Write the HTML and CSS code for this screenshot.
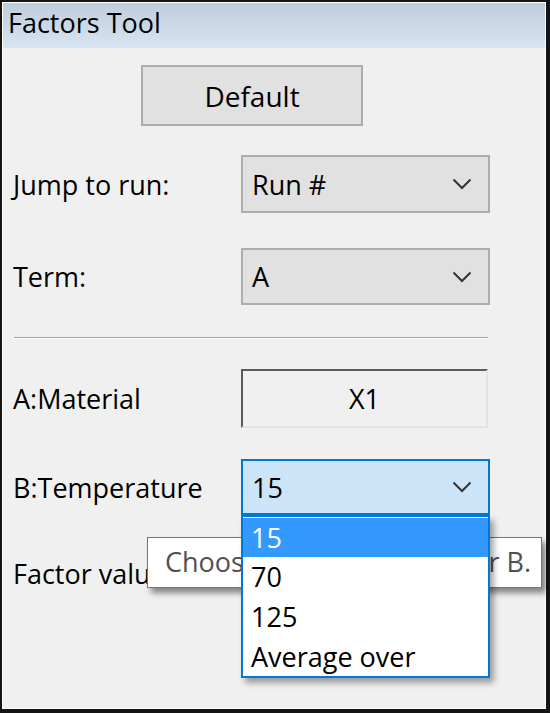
FILE: index.html
```html
<!DOCTYPE html>
<html>
<head>
<meta charset="utf-8">
<link rel="stylesheet" href="styles.css">
</head>
<body>
<div class="window">
  <div class="titlebar">Factors Tool</div>
  <div class="content">
    <div class="btn-row"><div class="btn">Default</div></div>
    <div class="row row-jump">
      <span class="label">Jump to run:</span>
      <div class="select"><span class="value">Run #</span><svg class="chev" width="20" height="12" viewBox="0 0 20 12"><polyline points="1.5,1.5 10,10 18.5,1.5" fill="none" stroke="#333" stroke-width="2"/></svg></div>
    </div>
    <div class="row row-term">
      <span class="label">Term:</span>
      <div class="select"><span class="value">A</span><svg class="chev" width="20" height="12" viewBox="0 0 20 12"><polyline points="1.5,1.5 10,10 18.5,1.5" fill="none" stroke="#333" stroke-width="2"/></svg></div>
    </div>
    <div class="separator"></div>
    <div class="row row-mat">
      <span class="label">A:Material</span>
      <div class="field">X1</div>
    </div>
    <div class="row row-temp">
      <span class="label">B:Temperature</span>
      <div class="select focused"><span class="value">15</span><svg class="chev" width="20" height="12" viewBox="0 0 20 12"><polyline points="1.5,1.5 10,10 18.5,1.5" fill="none" stroke="#333" stroke-width="2"/></svg>
        <div class="dropdown">
          <div class="item selected">15</div>
          <div class="item">70</div>
          <div class="item">125</div>
          <div class="item">Average over</div>
        </div>
      </div>
    </div>
    <div class="row row-factor">
      <span class="label">Factor values:</span>
      <div class="tooltip"><span>Choose a value</span><span>for B.</span></div>
    </div>
  </div>
</div>
</body>
</html>
```
FILE: styles.css
```css
html, body {
  margin: 0;
  padding: 0;
  background: #f0f0f0;
}
body {
  font-family: "Open Sans", "Noto Sans", sans-serif;
  font-size: 27px;
  font-weight: 500;
  color: #000;
}
.window {
  box-sizing: border-box;
  width: 550px;
  height: 713px;
  border: 2px solid #141414;
  border-right-width: 4px;
  border-bottom-width: 4px;
  background: #f0f0f0;
  box-shadow: inset 1px 1px 0 #ffffff, inset -1px -1px 0 #ffffff;
  position: relative;
}
.titlebar {
  height: 45px;
  margin: 1px 1px 0 1px;
  background: linear-gradient(#bfcddd, #d7e4f1);
  padding-left: 5px;
  line-height: 40px;
  font-size: 27px;
}
.content {
  padding-left: 10px;
  display: flex;
  flex-direction: column;
}
.btn-row {
  margin-top: 17px;
  padding-left: 129px;
}
.btn {
  box-sizing: border-box;
  width: 222px;
  height: 61px;
  background: #e1e1e1;
  border: 2px solid #adadad;
  display: flex;
  align-items: center;
  justify-content: center;
  font-size: 28px;
}
.row {
  display: flex;
  align-items: center;
  position: relative;
}
.label {
  width: 229px;
  flex: none;
  padding-left: 1px;
  box-sizing: border-box;
}
.row-jump { margin-top: 29px; }
.row-term { margin-top: 35px; }
.row-term .select { height: 57px; }
.select {
  box-sizing: border-box;
  width: 249px;
  height: 58px;
  background: #e1e1e1;
  border: 2px solid #adadad;
  display: flex;
  align-items: center;
  justify-content: space-between;
  padding: 0 16px 0 9px;
  position: relative;
}
.select.focused {
  height: 56px;
  background: #cce4f7;
  border-color: #0078d7;
}
.chev { display: block; }
.separator {
  margin-top: 32px;
  width: 474px;
  margin-left: 2px;
  height: 1px;
  background: #a0a0a0;
  border-bottom: 1px solid #ffffff;
}
.row-mat { margin-top: 30px; }
.field {
  box-sizing: border-box;
  width: 247px;
  height: 59px;
  background: #f0f0f0;
  border-top: 2px solid #5a5a5a;
  border-left: 2px solid #5a5a5a;
  border-right: 2px solid #e3e3e3;
  border-bottom: 2px solid #e3e3e3;
  display: flex;
  align-items: center;
  justify-content: center;
}
.row-temp { margin-top: 31px; z-index: 3; }
.dropdown {
  position: absolute;
  left: -2px;
  top: 54px;
  box-sizing: border-box;
  width: 249px;
  height: 163px;
  background: #ffffff;
  border: 2px solid #0078d7;
  padding-top: 1px;
  box-shadow: 4px 5px 6px rgba(0,0,0,0.35);
}
.item {
  height: 40px;
  line-height: 40px;
  padding-left: 8px;
}
.item.selected {
  background: #3399ff;
  color: #ffffff;
  height: 39px;
  line-height: 39px;
}
.row-factor { margin-top: 40px; z-index: 2; }
.tooltip {
  position: absolute;
  left: 135px;
  top: -18px;
  box-sizing: border-box;
  width: 395px;
  height: 51px;
  background: #ffffff;
  border: 1px solid #767676;
  color: #505050;
  padding: 0 10px 0 17px;
  line-height: 47px;
  white-space: nowrap;
  display: flex;
  justify-content: space-between;
  box-shadow: 4px 5px 6px rgba(0,0,0,0.45);
}
```
